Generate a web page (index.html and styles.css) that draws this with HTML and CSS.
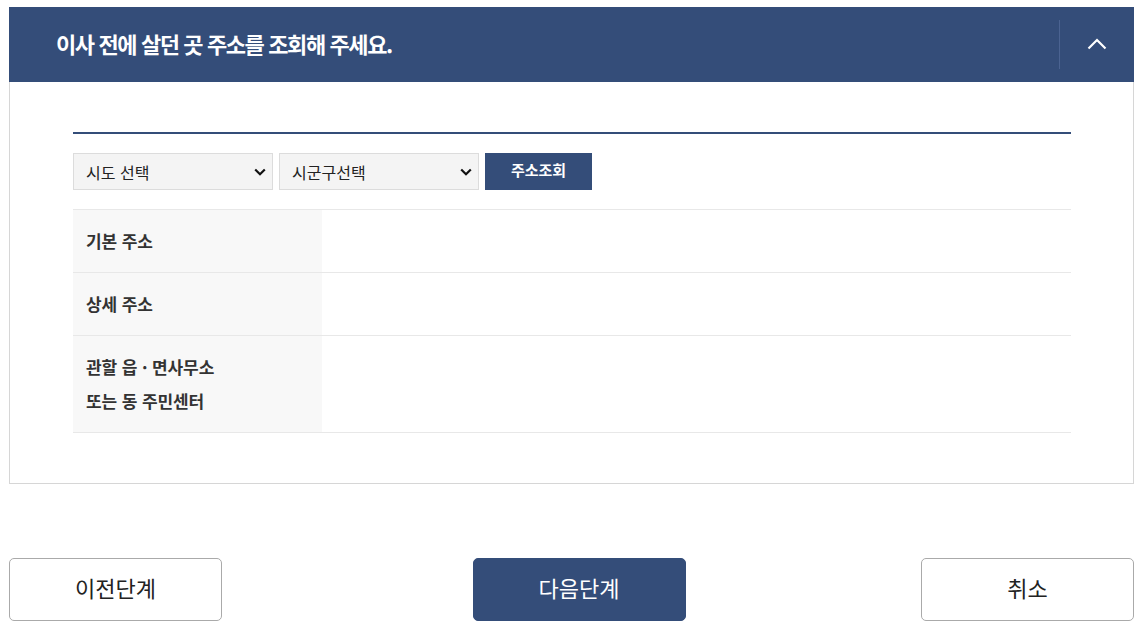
FILE: index.html
```html
<!DOCTYPE html>
<html lang="ko">
<head>
<meta charset="utf-8">
<title>주소 조회</title>
<link rel="stylesheet" href="styles.css">
</head>
<body>
<div class="page">
  <section class="panel">
    <div class="panel-head">
      <h2 class="panel-title">이사 전에 살던 곳 주소를 조회해 주세요.</h2>
      <div class="toggle">
        <svg width="20" height="12" viewBox="0 0 20 12"><polyline points="1.5,10.5 10,2 18.5,10.5" fill="none" stroke="#ffffff" stroke-width="2.2"/></svg>
      </div>
    </div>
    <div class="panel-body">
      <div class="rule"></div>
      <div class="search-row">
        <div class="select">
          <span>시도 선택</span>
          <svg width="12" height="8" viewBox="0 0 12 8"><polyline points="1.2,1.5 6,6.2 10.8,1.5" fill="none" stroke="#111111" stroke-width="2.2"/></svg>
        </div>
        <div class="select">
          <span>시군구선택</span>
          <svg width="12" height="8" viewBox="0 0 12 8"><polyline points="1.2,1.5 6,6.2 10.8,1.5" fill="none" stroke="#111111" stroke-width="2.2"/></svg>
        </div>
        <button class="search-btn" type="button">주소조회</button>
      </div>
      <div class="addr-table">
        <div class="addr-row">
          <div class="addr-label">기본 주소</div>
          <div class="addr-value"></div>
        </div>
        <div class="addr-row">
          <div class="addr-label">상세 주소</div>
          <div class="addr-value"></div>
        </div>
        <div class="addr-row">
          <div class="addr-label">관할 읍 · 면사무소<br>또는 동 주민센터</div>
          <div class="addr-value"></div>
        </div>
      </div>
    </div>
  </section>
  <div class="actions">
    <button class="btn" type="button">이전단계</button>
    <button class="btn btn-primary" type="button">다음단계</button>
    <button class="btn" type="button">취소</button>
  </div>
</div>
</body>
</html>
```
FILE: styles.css
```css
* { box-sizing: border-box; }
html, body { margin: 0; padding: 0; background: #ffffff; }
body {
  font-family: "Noto Sans CJK KR", "Noto Sans", sans-serif;
  color: #222222;
}
.page {
  width: 1125px;
  margin: 7px 0 0 9px;
}
.panel-head {
  height: 75px;
  background: #344d79;
  display: flex;
  align-items: center;
  justify-content: space-between;
}
.panel-title {
  margin: 0 0 3px 47px;
  font-size: 22px;
  font-weight: 700;
  letter-spacing: -1.4px;
  line-height: 30px;
  color: #ffffff;
}
.toggle {
  width: 75px;
  height: 49px;
  border-left: 1px solid #4b6391;
  display: flex;
  align-items: center;
  justify-content: center;
  padding-bottom: 2px;
}
.panel-body {
  border: 1px solid #d6d6d6;
  border-top: none;
  padding: 50px 62px 50px 63px;
}
.rule {
  height: 2px;
  background: #344d79;
}
.search-row {
  margin-top: 19px;
  display: flex;
  gap: 6px;
}
.select {
  width: 200px;
  height: 37px;
  background: #f4f4f4;
  border: 1px solid #dcdcdc;
  display: flex;
  align-items: center;
  justify-content: space-between;
  padding: 0 6px 0 12px;
  font-size: 16px;
  color: #222222;
}
.search-btn {
  width: 107px;
  height: 37px;
  border: none;
  background: #344d79;
  color: #ffffff;
  font-family: inherit;
  font-size: 15px;
  font-weight: 700;
  padding: 0 0 5px;
  cursor: pointer;
}
.addr-table {
  margin-top: 19px;
  border-top: 1px solid #e8e8e8;
}
.addr-row {
  display: grid;
  grid-template-columns: 249px 1fr;
  border-bottom: 1px solid #e8e8e8;
}
.addr-label {
  background: #f8f8f8;
  padding: 14px 13px;
  font-size: 17px;
  font-weight: 700;
  line-height: 34px;
  color: #333333;
  letter-spacing: -0.1px;
}
.actions {
  margin-top: 74px;
  display: flex;
  justify-content: space-between;
}
.btn {
  width: 213px;
  height: 63px;
  border: 1px solid #aaaaaa;
  border-radius: 5px;
  background: #ffffff;
  font-family: inherit;
  font-size: 22px;
  color: #222222;
  cursor: pointer;
  padding: 0 0 5px;
}
.btn-primary {
  background: #344d79;
  border-color: #344d79;
  color: #ffffff;
  margin-left: 15px;
}
```
